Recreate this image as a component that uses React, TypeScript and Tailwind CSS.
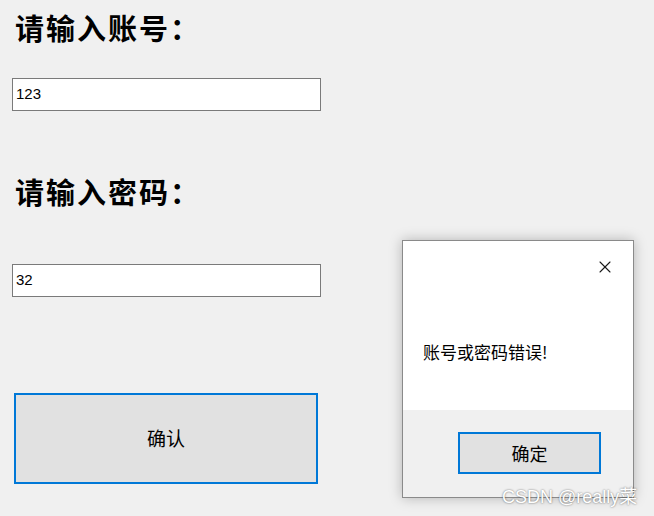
import { X } from "lucide-react";

const cjk = "font-['Microsoft_YaHei','Noto_Sans_CJK_SC',sans-serif]";

function Field({ value }: { value: string }) {
  return (
    <div className="w-[309px] h-[33px] bg-white border border-[#7a7a7a] flex items-center px-[3px]">
      <span className="text-[15px] text-black font-['Liberation_Sans',sans-serif]">{value}</span>
    </div>
  );
}

export default function App() {
  return (
    <div className={`relative w-[654px] h-[516px] overflow-hidden bg-[#f0f0f0] ${cjk}`}>
      <div className="flex flex-col pl-[12px]">
        <h1 className="mt-[11px] pl-[3px] text-[29px] leading-[32px] tracking-[2px] font-bold text-black">请输入账号：</h1>
        <div className="mt-[35px]">
          <Field value="123" />
        </div>
        <h1 className="mt-[64px] pl-[3px] text-[29px] leading-[32px] tracking-[2px] font-bold text-black">请输入密码：</h1>
        <div className="mt-[57px]">
          <Field value="32" />
        </div>
        <button className="mt-[96px] ml-[2px] w-[304px] h-[91px] bg-[#e1e1e1] border-2 border-[#0078d7] text-[19px] text-black">
          确认
        </button>
      </div>

      <div className="absolute left-[402px] top-[240px] w-[232px] h-[258px] bg-white border border-[#8a8a8a] shadow-[0_0_12px_rgba(0,0,0,0.25)] flex flex-col">
        <div className="flex justify-end pt-[16px] pr-[18px]">
          <X className="w-[20px] h-[20px] text-[#1a1a1a]" strokeWidth={1.3} />
        </div>
        <div className="flex-1 flex items-center pl-[20px] pt-[16px]">
          <span className="text-[17px] text-black">账号或密码错误!</span>
        </div>
        <div className="h-[87px] bg-[#f0f0f0] flex items-start justify-end pt-[22px] pr-[32px]">
          <button className="w-[143px] h-[42px] bg-[#e1e1e1] border-2 border-[#0078d7] text-[18px] text-black">
            确定
          </button>
        </div>
      </div>

      <div className="absolute left-[502px] top-[484px] text-[18px] text-white [text-shadow:0_0_2px_rgba(0,0,0,0.6)] font-['Liberation_Sans','Noto_Sans_CJK_SC',sans-serif]">
        CSDN @really菜
      </div>
    </div>
  );
}
